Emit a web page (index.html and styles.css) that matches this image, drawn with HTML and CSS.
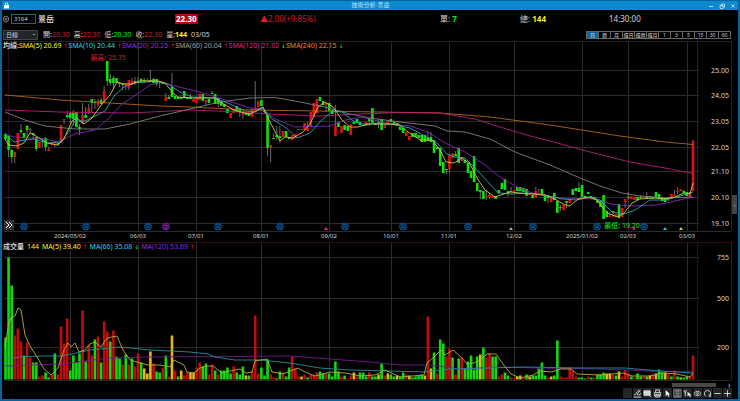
FILE: index.html
```
<!DOCTYPE html>
<html lang="zh-Hant">
<head>
    <meta charset="UTF-8">
    <meta name="viewport" content="width=device-width, initial-scale=1.0">
    <title>技術分析-景岳</title>
    <link rel="stylesheet" href="styles.css">
</head>
<body>
    <div class="window">
        <header class="titlebar">
            <svg class="lock" viewBox="0 0 6 8"><path d="M1.5 4V2.2a1.5 1.5 0 0 1 3 0V4" fill="none" stroke="#fff"/><rect y="3.5" width="6" height="4" fill="#fff"/></svg>
            <h1>技術分析-景岳</h1>
            <div class="window-buttons">
                <button aria-label="Minimize"><svg viewBox="0 0 6 6"><path d="M1 3.5h4"/></svg></button>
                <button aria-label="Restore"><svg viewBox="0 0 6 6"><path d="M1 2.5h3v3H1zM2.5 2.5V1h3v3H4"/></svg></button>
                <button aria-label="Close"><svg viewBox="0 0 6 6"><path d="M1.5 1.5l3 3m0-3l-3 3"/></svg></button>
            </div>
        </header>

        <div class="quote">
            <div class="symbol">
                <svg class="add" viewBox="0 0 8 8"><circle cx="4" cy="4" r="2.8"/><path d="M4 2.4v3.2M2.4 4h3.2"/></svg>
                <input type="text" value="3164" aria-label="股票代號">
                <strong>景岳</strong>
            </div>
            <div><span class="price">22.30</span></div>
            <div class="down">▲2.00(+9.85%)</div>
            <div>單: <b class="up">7</b></div>
            <div>總: <b class="total">144</b></div>
            <div>14:30:00</div>
        </div>

        <div class="ohlc">
            <select aria-label="週期"><option>日線</option></select>
            <span>開:<i class="down">20.30</i></span>
            <span>高:<i class="down">22.30</i></span>
            <span>低:<i class="up">20.30</i></span>
            <span>收:<i class="down">22.30</i></span>
            <span>量:<b class="total">144</b></span>
            <span>03/05</span>
            <div class="periods">
                <button class="active">日</button><button>週</button><button>月</button><button>還日</button><button>還週</button><button>還月</button><button>1</button><button>3</button><button>5</button><button>15</button><button>30</button><button>60</button>
            </div>
        </div>

        <main>
            <section class="pane">
                <div class="legend">
                    <span><b>均線:</b><span class="yellow">SMA(5) 20.69</span> <i class="down">↑</i></span>
                    <span class="cyan">SMA(10) 20.44 <i class="down">↑</i></span>
                    <span class="purple">SMA(20) 20.25 <i class="down">↑</i></span>
                    <span class="gray">SMA(60) 20.04 <i class="down">↑</i></span>
                    <span class="pink">SMA(120) 21.02 <i class="up">↓</i></span>
                    <span class="orange">SMA(240) 22.15 <i class="up">↓</i></span>
                </div>
                <svg id="priceChart" class="chart" viewBox="2 41 736 201"></svg>
                <button class="expand" aria-label="展開"><svg viewBox="0 0 10 10"><path d="M2 2l3 3-3 3M5 2l3 3-3 3"/></svg></button>
                <button class="side-handle">‹</button>
            </section>
            <section class="pane volume">
                <div class="legend">
                    <b>成交量</b>
                    <span class="yellow">144</span>
                    <span class="yellow">MA(5) 39.40 <i class="down">↑</i></span>
                    <span class="cyan">MA(66) 35.08 <i class="up">↓</i></span>
                    <span class="purple">MA(120) 53.69 <i class="down">↑</i></span>
                </div>
                <svg id="volumeChart" class="chart" viewBox="2 242 736 139"></svg>
            </section>
        </main>

        <div class="scrollbar"><div class="thumb"></div><span>›</span></div>
        <footer class="toolbar">
            <button aria-label="Blank"></button>
            <button aria-label="Draw"><svg viewBox="0 0 10 10"><path d="M1 9h8M1 7l3-2 2 2 3-2M4 4l3-3 1 1-3 3z"/></svg></button>
            <button aria-label="Table"><svg viewBox="0 0 10 10"><path d="M1 2h7v5H1z" fill="#ccc"/><path d="M6 6l3 3M1 4h7"/></svg></button>
            <button aria-label="Print"><svg viewBox="0 0 10 10"><path d="M3 4V1h4v3M1.5 4h7v3.5h-7zM3 6h4v3H3z"/></svg></button>
            <button aria-label="Pointer"><svg viewBox="0 0 10 10"><path d="M3 1v7l2-2 1 3 1-1-1-2h2z" fill="#fff" stroke="none"/></svg></button>
            <button aria-label="Layout"><svg viewBox="0 0 10 10"><path d="M1 1h8v8H1zM3.5 1v8M6.5 1v8M4 3h2M4 5h2M4 7h2" stroke-width="0.6"/></svg></button>
            <button aria-label="Trace"><svg viewBox="0 0 10 10"><path d="M1 1l1.5 3.5L4 1M2.5 4v4"/><path d="M5 3v5l1.5-1L8 9l1-1-1.5-1.5H9z" fill="#fff" stroke="none"/></svg></button>
            <button aria-label="Show"><svg viewBox="0 0 10 10"><path d="M1 5q4-5 8 0q-4 5-8 0z"/><circle cx="5" cy="5" r="1"/></svg></button>
            <button aria-label="Refresh"><svg viewBox="0 0 10 10"><path d="M7 8a3.5 3.5 0 1 0-4 0M7 6v2h2"/></svg></button>
            <button aria-label="Zoom out"><svg viewBox="0 0 10 10"><path d="M1.5 5h7"/></svg></button>
            <button aria-label="Zoom in"><svg viewBox="0 0 10 10"><path d="M1.5 5h7M5 1.5v7"/></svg></button>
        </footer>
    </div>
    <script src="chart.js"></script>
</body>
</html>
```
FILE: styles.css
```
* {
    box-sizing: border-box;
}
body {
    margin: 0;
    background-color: #000;
    color: #d4d4d4;
    font-family: "Noto Sans", "Noto Sans CJK TC", sans-serif;
    font-size: 8px;
    line-height: 10px;
}
button, input, select {
    margin: 0;
    padding: 0;
    border: 0;
    background: none;
    color: inherit;
    font: inherit;
}
i {
    font-style: normal;
}
svg {
    display: block;
}
.window {
    min-height: 100vh;
    border: solid #07649c;
    border-width: 0 2px 2px;
}
.titlebar {
    display: flex;
    align-items: center;
    justify-content: space-between;
    height: 10px;
    padding: 0 2px;
    border-top: 1px solid #07649c;
    background-color: #0c89cf;
}
.titlebar h1 {
    margin: 0 0 0 24px;
    color: #c2e4fa;
    font-size: 6px;
    font-weight: normal;
    line-height: 9px;
}
.lock {
    width: 5px;
    height: 7px;
}
.window-buttons {
    display: flex;
    gap: 5px;
}
.window-buttons svg {
    width: 6px;
    height: 6px;
    fill: none;
    stroke: #d5ecfa;
    stroke-width: 0.8;
}
.quote {
    display: grid;
    grid-template-columns: 173fr 85fr 180fr 80fr 89fr 129fr;
    align-items: center;
    height: 18px;
}
.symbol {
    display: flex;
    align-items: center;
}
.symbol .add {
    width: 8px;
    height: 8px;
    margin-right: 1px;
    fill: none;
    stroke: #999;
    stroke-width: 0.8;
}
.symbol input {
    width: 25px;
    height: 10px;
    margin-right: 2px;
    padding-left: 2px;
    border: 1px solid #555;
    font-size: 6px;
}
.symbol strong {
    color: #e4e4e4;
    font-weight: 500;
}
.price {
    display: inline-block;
    padding: 0 1px;
    background-color: #b3060c;
    color: #fff;
    font-weight: bold;
}
.down {
    color: #dd1820;
}
.up {
    color: #13f013;
}
.total, .yellow {
    color: #f8f41c;
}
.cyan {
    color: #24d2e6;
}
.purple {
    color: #9a28dc;
}
.gray {
    color: #a0a0a0;
}
.pink {
    color: #dc2894;
}
.orange {
    color: #f0841f;
}
.ohlc {
    display: flex;
    align-items: center;
    gap: 4px;
    height: 13px;
    padding: 0 7px 0 1px;
    font-size: 7px;
}
.ohlc select {
    width: 35px;
    height: 10px;
    margin-right: 1px;
    padding-left: 2px;
    border: 1px solid #444;
    appearance: none;
    background: linear-gradient(#999, #999) right 2px center / 2px 1px no-repeat #20262a;
    font-size: 6px;
    line-height: 8px;
}
.periods {
    display: flex;
    margin-left: auto;
    border-left: 1px solid #666;
}
.periods button {
    width: 12px;
    height: 8px;
    border: solid #666;
    border-width: 1px 1px 1px 0;
    font-size: 5px;
    line-height: 6px;
    white-space: nowrap;
}
.periods .active {
    background-color: #0b6a9e;
}
.pane {
    position: relative;
}
.legend {
    position: absolute;
    top: 0;
    left: 1px;
    display: flex;
    gap: 1px;
    font-size: 7px;
    line-height: 9px;
    white-space: nowrap;
}
.volume .legend {
    gap: 3px;
}
.legend b {
    color: #e4e4e4;
    font-weight: 500;
}
.legend i {
    display: inline-block;
    width: 4px;
    font-family: "DejaVu Sans", sans-serif;
    font-size: 6px;
    text-align: center;
}
.chart {
    width: 100%;
    height: auto;
}
.chart text {
    fill: #d4d4d4;
    font-size: 6px;
    text-anchor: middle;
}
.chart .scale {
    font-size: 7px;
    text-anchor: end;
}
.chart .highest, .chart .lowest {
    fill: #dd1820;
    font-size: 7px;
}
.chart .lowest {
    fill: #13f013;
}
.chart .mark {
    fill: inherit;
    font-size: 6px;
}
.expand {
    position: absolute;
    bottom: 12px;
    left: 2px;
    width: 10px;
    height: 10px;
    background-color: #333;
}
.expand svg {
    fill: none;
    stroke: #fff;
}
.side-handle {
    position: absolute;
    right: 1px;
    bottom: 28px;
    width: 5px;
    height: 19px;
    background-color: #444;
    font-size: 6px;
    line-height: 18px;
}
.scrollbar {
    display: flex;
    align-items: center;
    justify-content: flex-end;
    gap: 12px;
    height: 7px;
    padding-right: 7px;
    line-height: 6px;
}
.thumb {
    width: 44px;
    height: 4px;
    background-color: #484848;
}
.scrollbar span {
    width: 3px;
}
.toolbar {
    display: flex;
    justify-content: flex-end;
    gap: 1px;
    padding-right: 6px;
}
.toolbar button {
    width: 9px;
    height: 10px;
    background-color: #252525;
}
.toolbar svg {
    width: 9px;
    height: 9px;
    fill: none;
    stroke: #ddd;
}
```
FILE: chart.js
```
// one entry per day: colour, high, open/close top, open/close bottom, low
const candles = `g133,134,139,140 g136,136,150,157 g149,150,157,163 r152,152,157,163 r133,133,149,149 g124,130,132,134 g133,133,138,139 g125,126,130,137 r128,129,130,134 g133,133,135,139
g137,137,149,151 r142,142,148,148 r138,141,142,147 g137,138,147,151 r147,149,151,151 r142,143,145,145 r141,144,145,147 g143,143,144,146 r125,125,143,143 r119,119,120,124
g111,115,117,119 g112,113,118,123 g110,113,119,125 g112,112,127,127 g124,127,129,135 r103,115,124,124 g107,115,118,118 r104,108,113,114 g99,99,103,112 g99,102,103,109
r99,101,105,107 g98,100,104,104 r86,91,103,103 g61,61,81,86 g74,79,83,86 g76,78,83,89 g78,78,83,83 g83,83,84,87 g84,84,85,90 r83,83,86,90
r80,80,88,90 r78,81,85,85 g77,81,83,85 r77,81,83,83 g78,79,81,83 g78,80,81,83 r78,80,81,82 g70,80,82,82 g78,79,83,83 g79,79,84,86
g82,82,83,88 g82,82,84,84 r93,97,101,101 g95,97,99,99 g73,87,97,97 g96,96,99,99 g97,97,99,99 g97,97,99,99 g91,91,98,98 g97,97,99,99
g94,97,99,99 r99,99,102,102 r97,97,103,103 r94,94,100,100 g94,94,101,101 r100,100,102,105 g99,99,103,103 g91,93,94,94 g94,94,104,104 g98,98,104,107
g102,102,106,106 g104,104,107,107 g109,109,113,113 r113,113,118,118 r109,109,113,113 g106,106,111,111 g108,108,112,117 r111,111,115,119 g113,113,115,115 g113,113,116,116
r109,109,117,117 r81,108,110,110 r101,101,107,107 g100,100,106,106 g110,111,112,113 g115,115,148,156 r145,145,148,162 g133,138,139,139 g126,135,137,140 g126,136,138,143
r131,131,137,137 g131,131,137,137 g137,137,139,139 r135,135,140,140 r134,134,138,138 r129,129,130,130 r129,129,130,130 r123,123,130,130 r122,128,131,131 r112,112,127,127
r103,103,117,117 r99,99,113,113 g97,97,101,101 g101,101,105,105 r103,103,105,112 g103,103,111,111 g110,110,114,114 r105,126,136,136 g122,122,127,127 r126,126,133,133
g125,125,130,130 g126,126,131,131 r124,124,135,135 g122,122,124,124 g119,119,123,123 g122,122,125,125 g125,125,126,126 r122,122,126,126 g118,118,121,126 g108,108,123,123
g123,123,125,125 g119,122,123,128 g119,119,130,130 r125,125,128,128 r120,120,125,125 g119,119,122,122 g122,122,124,124 g123,123,125,125 g127,127,130,130 g128,128,133,133
r132,132,136,136 r136,136,140,140 g133,133,137,137 g133,133,137,137 g135,135,138,138 g135,135,142,142 g135,135,142,142 g131,137,141,141 g132,137,142,142 g140,140,153,153
g147,147,149,149 g148,148,166,166 g162,162,173,173 g169,169,170,174 r155,155,169,173 r153,153,158,158 g151,154,156,156 g148,148,163,163 r157,157,161,161 g160,160,163,163
g163,163,173,173 g171,171,178,178 g156,156,182,182 g183,183,191,191 g190,190,192,199 g191,191,199,199 r190,196,197,200 r193,195,197,199 r196,196,198,198 g196,196,199,199
g190,190,193,193 g183,183,189,189 g179,179,190,190 g191,191,193,197 g187,191,192,192 r190,190,192,192 g187,187,191,191 g187,187,191,191 g188,188,192,192 g189,189,196,196
r194,194,195,195 g195,195,198,198 r187,191,198,198 g189,194,195,195 g189,189,195,195 g195,195,201,201 g196,196,198,203 r198,198,202,202 g193,193,200,200 g201,201,213,213
g205,207,208,211 r205,205,210,210 g201,201,203,208 r199,199,203,203 g189,189,195,195 g188,188,191,191 g182,188,192,192 g185,185,197,197 g195,196,197,198 g192,192,194,194
g196,196,197,198 g197,197,199,199 g200,200,203,203 g200,200,207,207 g195,195,219,219 g211,211,217,217 r212,216,217,217 g211,211,212,217 r214,214,217,217 g204,204,218,218
r208,208,217,217 r199,199,202,208 g192,197,198,200 r196,196,199,199 r197,197,200,200 g197,197,200,200 g195,197,198,199 r196,197,198,198 g192,197,198,199 g196,196,197,198
g197,197,198,199 g192,192,197,197 g194,194,199,199 g197,197,201,201 g198,198,202,202 g197,198,199,201 r194,194,198,198 r190,195,196,196 r187,191,192,194 r189,189,191,191
g190,191,193,193 g192,192,196,196 r192,192,198,198 r140,141,191,191`.split(/\s+/);

// colour and bar height, same days as above
const volumes = `g42 g122 g94 r44 r51 r38 g24 r37 r22 g17 g17 r3 r4 g7 g2 r5 g26 r5 r53 r36
r61 g9 g24 g17 g26 r69 g18 r35 r24 g40 r43 g17 r58 r48 g38 r49 g23 g21 r15 g25
r15 g21 r13 r26 g17 y11 y6 y28 r16 g8 g7 r12 g24 r3 y44 r9 g3 y9 r4 r7
y7 y7 r12 r17 g13 g16 r5 r15 g9 r5 g9 g9 g12 g6 r13 g7 g5 g13 y4 g4
r8 r64 r6 g12 g4 g20 r5 r2 y1 g8 r7 g3 g12 r23 r11 r3 y3 r5 g2 r5
r4 r7 g8 g6 r6 g6 g3 g18 g8 r3 g4 r1 r4 y7 r3 g7 g7 g3 r7 g3
g3 y5 g16 r4 y6 g5 g3 y4 g3 g7 r5 y4 g2 g3 g4 g5 y4 r63 y11 g27
r6 g40 g36 r23 r31 g22 r5 g21 r22 g11 g18 g24 g10 g23 y25 g32 r22 r26 g23 g23
r3 r5 g7 g4 r2 r2 y3 y4 r2 g5 y3 g4 g4 g11 g17 g4 r2 y3 g4 g39
r3 r2 r2 r12 r9 r3 g2 g2 g1 r3 g2 r2 g5 g5 g7 y6 y6 r5 g4 y8
r3 r10 r6 g3 r2 g6 g3 r3 g3 y4 r5 y6 g10 g7 y7 r5 g3 r9 g3 y2
g2 g3 r3 r24`.split(/\s+/);

const priceLines = {
    '#b56414': '5,95 60,100 110,103 160,106 190,107 250,110 350,111.5 440,113 490,117 550,125 620,136 665,142 693,144.5',
    '#b81d7a': '5,110 60,112 130,113 190,110 240,112 270,114 320,116 360,114 400,112.5 440,113 475,119 500,127 530,136 550,141 590,152 630,162 665,168 693,173.5',
    '#808080': '5,112 25,120 45,126 75,129 105,129 130,124 160,116 190,109 220,102 250,98 275,97.5 300,102 325,107 350,114 370,118 400,122 435,126 447,131 465,132 490,139 515,152 550,165 580,178 600,186 622,193 640,196 665,198 693,197',
    '#8226bc': '5,134 14,137 30,138 45,139 58,142 75,134 95,130 108,119 122,104 140,92 150,85 160,82 175,86 200,92 225,100 250,108 262,109 275,119 295,127 330,126 345,120 362,117 390,124 410,126 428,132 445,143 465,152 485,165 500,177 517,187 535,194 560,198 595,199 610,204 630,206 657,205 675,201 693,197',
    '#23aab8': '5,134 14,142 24,140 34,139 47,143 60,142 68,133 75,121 85,121 95,116 105,111 114,96 124,87 135,83 158,81 168,84 180,92 192,97 215,98 230,104 245,111 255,112 263,108 272,119 285,127 297,138 310,133 320,122 332,111 342,112 352,120 360,124 390,124 410,128 425,136 437,143 447,154 455,157 465,158 475,168 488,182 498,193 512,194 528,193 545,195 562,199 577,200 590,197 600,200 612,212 624,214 635,210 650,200 665,200 680,196 693,192',
    '#d4c640': '5,139 9,145 17,146 24,143 30,133 36,136 47,143 58,145 64,139 72,121 77,118 84,124 92,118 102,104 110,95 117,82 124,84 131,84 140,81 158,81 165,83 173,93 178,97 190,98 215,98 225,105 236,111 250,114 263,107 268,118 280,141 285,137 293,138 303,132 310,124 318,107 325,102 333,107 342,120 350,127 358,127 368,124 390,124 400,125 408,132 420,140 432,140 440,150 446,162 454,163 462,158 470,164 477,178 485,190 495,197 510,192 520,193 545,195 555,199 563,204 570,206 578,199 588,197 597,200 603,208 609,214 618,217 624,213 632,203 640,199 655,198 664,199 675,197 684,193 690,194 693,183'
};

const volumeLines = {
    '#6d1c91': '5,366 60,364 110,358 150,357 290,356 330,359 370,362 400,365 430,365 460,369 500,367 540,368 600,369 650,371 693,372',
    '#238f9e': '5,360 20,357 40,356 62,356 90,350 120,347 150,350 190,352 208,354 215,357 235,360 260,360 290,363 320,368 350,370 390,371 425,372 450,369 490,368 525,367 580,368 625,368 660,371 693,373',
    '#b8ae36': '5,347 9,322 12,317 15,316 18,308 21,310 25,335 30,346 37,357 44,369 51,375 58,368 64,350 68,343 71,347 75,343 79,352 85,350 90,344 95,342 101,347 107,338 117,336 123,350 130,360 137,362 148,365 160,365 170,367 174,360 184,365 187,372 194,373 200,368 206,366 213,366 222,373 230,371 240,369 246,373 252,372 255,361 267,359 272,372 283,374 290,371 298,368 305,372 315,376 330,372 345,373 360,376 375,375 385,370 400,377 412,376 424,375 427,363 435,356 441,350 445,355 453,350 462,358 467,364 474,363 480,360 487,354 496,354 503,364 511,374 520,378 533,375 540,371 552,372 560,369 571,369 577,374 600,375 623,373 632,376 650,376 662,373 677,374 690,377 693,373'
};

const colors = { g: '#10e010', r: '#e0100c', y: '#eeb51c' };
const volumeColors = { g: '#12d812', r: '#c00c0c', y: '#e3b41c' };
const months = [[70, '2024/05/02'], [138, '06/03'], [196, '07/01'], [261, '08/01'], [329, '09/02'], [391, '10/01'], [449, '11/01'], [514, '12/02'], [582, '2025/01/02'], [628, '02/03'], [687, '03/03']];
const prices = [[70, '25.00'], [95, '24.05'], [121, '23.05'], [147, '22.05'], [171, '21.10'], [197, '20.10'], [223, '19.10']];

const dayX = i => 5.5 + i * 3.083;
const line = (x1, y1, x2, y2, color) => `<path d="M${x1} ${y1}L${x2} ${y2}" stroke="${color}"/>`;
const curves = lines => Object.entries(lines).map(([color, points]) =>
    `<polyline points="${points}" fill="none" stroke="${color}" stroke-width="0.9"/>`).join('');

function grid(top, bottom, rows) {
    let out = line(8.5, top, 8.5, bottom, '#241014');
    months.forEach(([x]) => out += line(x + 0.5, top, x + 0.5, bottom, '#2b2b2b'));
    rows.forEach(([y, text]) => {
        out += line(4, y + 0.5, 699, y + 0.5, '#2b2b2b');
        out += `<text class="scale" x="729" y="${y + 3}">${text}</text>`;
    });
    out += line(731.5, top, 731.5, bottom, '#222');
    return out;
}

function mark(x, text, color) {
    return `<g fill="${color}"><circle cx="${x}" cy="226.5" r="3.5" fill="#001425" stroke="${color}" stroke-width="0.8"/><text class="mark" x="${x}" y="229">${text}</text></g>`;
}

function drawPrice() {
    let out = grid(41, 231, prices);
    out += line(697.5, 41, 697.5, 231, '#262626') + line(4, 41.5, 731, 41.5, '#222') + line(4, 231.5, 731, 231.5, '#2b2b2b');
    candles.forEach((c, i) => {
        const [high, top, bottom, low] = c.slice(1).split(',').map(Number);
        out += `<path d="M${dayX(i)} ${high}V${low}" stroke="#858585" stroke-width="0.8"/>`;
        out += `<rect x="${dayX(i) - 1.3}" y="${top}" width="2.6" height="${bottom - top}" fill="${colors[c[0]]}"/>`;
    });
    out += curves(priceLines);
    months.forEach(([x, text]) => out += `<text x="${x}" y="238">${text}</text>`);
    [24, 86, 148, 218, 280, 345, 403, 468, 533, 597, 644].forEach(x => out += mark(x, '月', '#0c68b4'));
    out += mark(166, '季', '#9a1cba');
    [[326, '#d02a9a'], [511, '#aaa'], [634, '#8a20c8'], [665, '#20c8d8'], [681, '#e0d030']].forEach(([x, color]) =>
        out += `<path d="M${x} 227l2 3h-4z" fill="${color}"/>`);
    out += '<text class="highest" x="108" y="60">最高: 25.35</text><text class="lowest" x="622" y="228">最低: 19.20</text>';
    document.getElementById('priceChart').innerHTML = out;
}

function drawVolume() {
    let out = grid(242, 380, [[257, '755'], [298, '500'], [347, '200']]);
    out += line(4, 242.5, 731, 242.5, '#3a0a14') + line(4, 380.5, 731, 380.5, '#222') + line(697.5, 242, 697.5, 380, '#3a0a14');
    volumes.forEach((v, i) => {
        const height = Number(v.slice(1));
        out += `<rect x="${dayX(i) - 1.3}" y="${379.5 - height}" width="2.6" height="${height}" fill="${volumeColors[v[0]]}"/>`;
    });
    out += curves(volumeLines);
    document.getElementById('volumeChart').innerHTML = out;
}

drawPrice();
drawVolume();
```
